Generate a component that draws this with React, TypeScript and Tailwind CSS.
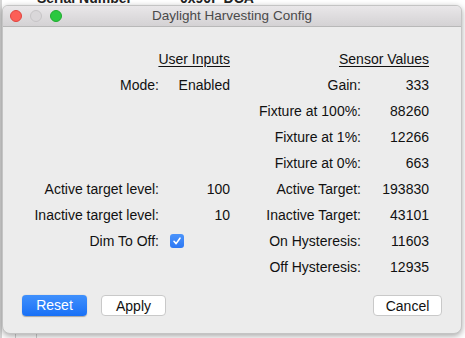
import React from "react";

const font = { fontFamily: '"Liberation Sans", Arial, sans-serif' };

const Row = (props: { label?: string; children?: React.ReactNode }) => (
    <>
        <div className="h-[26px] flex items-center justify-end">{props.label}</div>
        <div className="h-[26px] flex items-center justify-end">{props.children}</div>
    </>
);

const Checkbox = () => (
    <div className="w-full h-[26px] flex items-center pl-[11px]">
        <div className="w-[14px] h-[14px] rounded-[3px] bg-gradient-to-b from-[#4a93fb] to-[#2d78f4] flex items-center justify-center">
            <svg width="10" height="10" viewBox="0 0 10 10">
                <path d="M2 5.3 L4.1 7.6 L8 2.2" fill="none" stroke="white" strokeWidth="1.6" strokeLinecap="round" strokeLinejoin="round" />
            </svg>
        </div>
    </div>
);

const sensors: [string, string][] = [
    ["Gain:", "333"],
    ["Fixture at 100%:", "88260"],
    ["Fixture at 1%:", "12266"],
    ["Fixture at 0%:", "663"],
    ["Active Target:", "193830"],
    ["Inactive Target:", "43101"],
    ["On Hysteresis:", "11603"],
    ["Off Hysteresis:", "12935"],
];

export default function App() {
    return (
        <div className="relative w-[465px] h-[338px] bg-white overflow-hidden" style={font}>
            {/* table behind the window */}
            <div className="absolute left-0 top-0 h-full w-[2px] bg-[#d4d4d4]" />
            <div className="absolute top-[-12px] left-[37px] text-[14px] font-bold text-[#222]">Serial Number</div>
            <div className="absolute top-[-12px] left-[180px] text-[14px] font-bold text-[#222]">0x90F DCA</div>
            <div className="absolute bottom-0 left-[15px] h-[6px] w-px bg-[#cfcfcf]" />
            <div className="absolute bottom-0 left-[36px] h-[6px] w-px bg-[#cfcfcf]" />

            {/* window */}
            <div className="absolute left-[2px] top-[5px] w-[460px] h-[329px] rounded-t-[6px] rounded-b-[8px] bg-[#ececec] border border-[#c4c4c4] shadow-[0_2px_6px_rgba(0,0,0,0.35)] overflow-hidden flex flex-col">
                <div className="relative h-[21px] shrink-0 bg-gradient-to-b from-[#e9e7e9] to-[#d4d2d4] border-b border-[#b8b8b8] flex items-center justify-center">
                    <div className="absolute left-[7px] top-[4px] flex gap-[8px]">
                        <div className="w-[12px] h-[12px] rounded-full bg-[#fc5f57] border border-[#e0443e]" />
                        <div className="w-[12px] h-[12px] rounded-full bg-[#d9d7d9] border border-[#c6c4c6]" />
                        <div className="w-[12px] h-[12px] rounded-full bg-[#2bc840] border border-[#1fab2f]" />
                    </div>
                    <span className="text-[13.5px] text-[#4a4a4a]">Daylight Harvesting Config</span>
                </div>

                <div className="flex-1 flex flex-col text-[14px] text-[#111] pt-[19px]">
                    <div className="grid grid-cols-[156px_71px_131px_68px]">
                        <div className="col-span-2 h-[26px] flex items-center justify-end">
                            <span className="underline underline-offset-[2px]">User Inputs</span>
                        </div>
                        <div className="col-span-2 h-[26px] flex items-center justify-end">
                            <span className="underline underline-offset-[2px]">Sensor Values</span>
                        </div>

                        <Row label="Mode:">Enabled</Row>
                        <Row label={sensors[0][0]}>{sensors[0][1]}</Row>
                        <Row />
                        <Row label={sensors[1][0]}>{sensors[1][1]}</Row>
                        <Row />
                        <Row label={sensors[2][0]}>{sensors[2][1]}</Row>
                        <Row />
                        <Row label={sensors[3][0]}>{sensors[3][1]}</Row>
                        <Row label="Active target level:">100</Row>
                        <Row label={sensors[4][0]}>{sensors[4][1]}</Row>
                        <Row label="Inactive target level:">10</Row>
                        <Row label={sensors[5][0]}>{sensors[5][1]}</Row>
                        <div className="h-[26px] flex items-center justify-end">Dim To Off:</div>
                        <Checkbox />
                        <Row label={sensors[6][0]}>{sensors[6][1]}</Row>
                        <Row />
                        <Row label={sensors[7][0]}>{sensors[7][1]}</Row>
                    </div>

                    <div className="flex items-center px-[19px] mt-[15px]">
                        <button className="w-[65px] h-[21px] rounded-[4px] bg-gradient-to-b from-[#3f90fc] to-[#1870f6] text-white text-[14px] shadow-[0_0.5px_1px_rgba(0,0,0,0.3)]">
                            Reset
                        </button>
                        <button className="ml-[14px] w-[65px] h-[21px] rounded-[4px] bg-white border border-[#c9c9c9] text-[14px] text-[#111]">
                            Apply
                        </button>
                        <div className="flex-1" />
                        <button className="w-[69px] h-[21px] rounded-[4px] bg-white border border-[#c9c9c9] text-[14px] text-[#111]">
                            Cancel
                        </button>
                    </div>
                </div>
            </div>
        </div>
    );
}
